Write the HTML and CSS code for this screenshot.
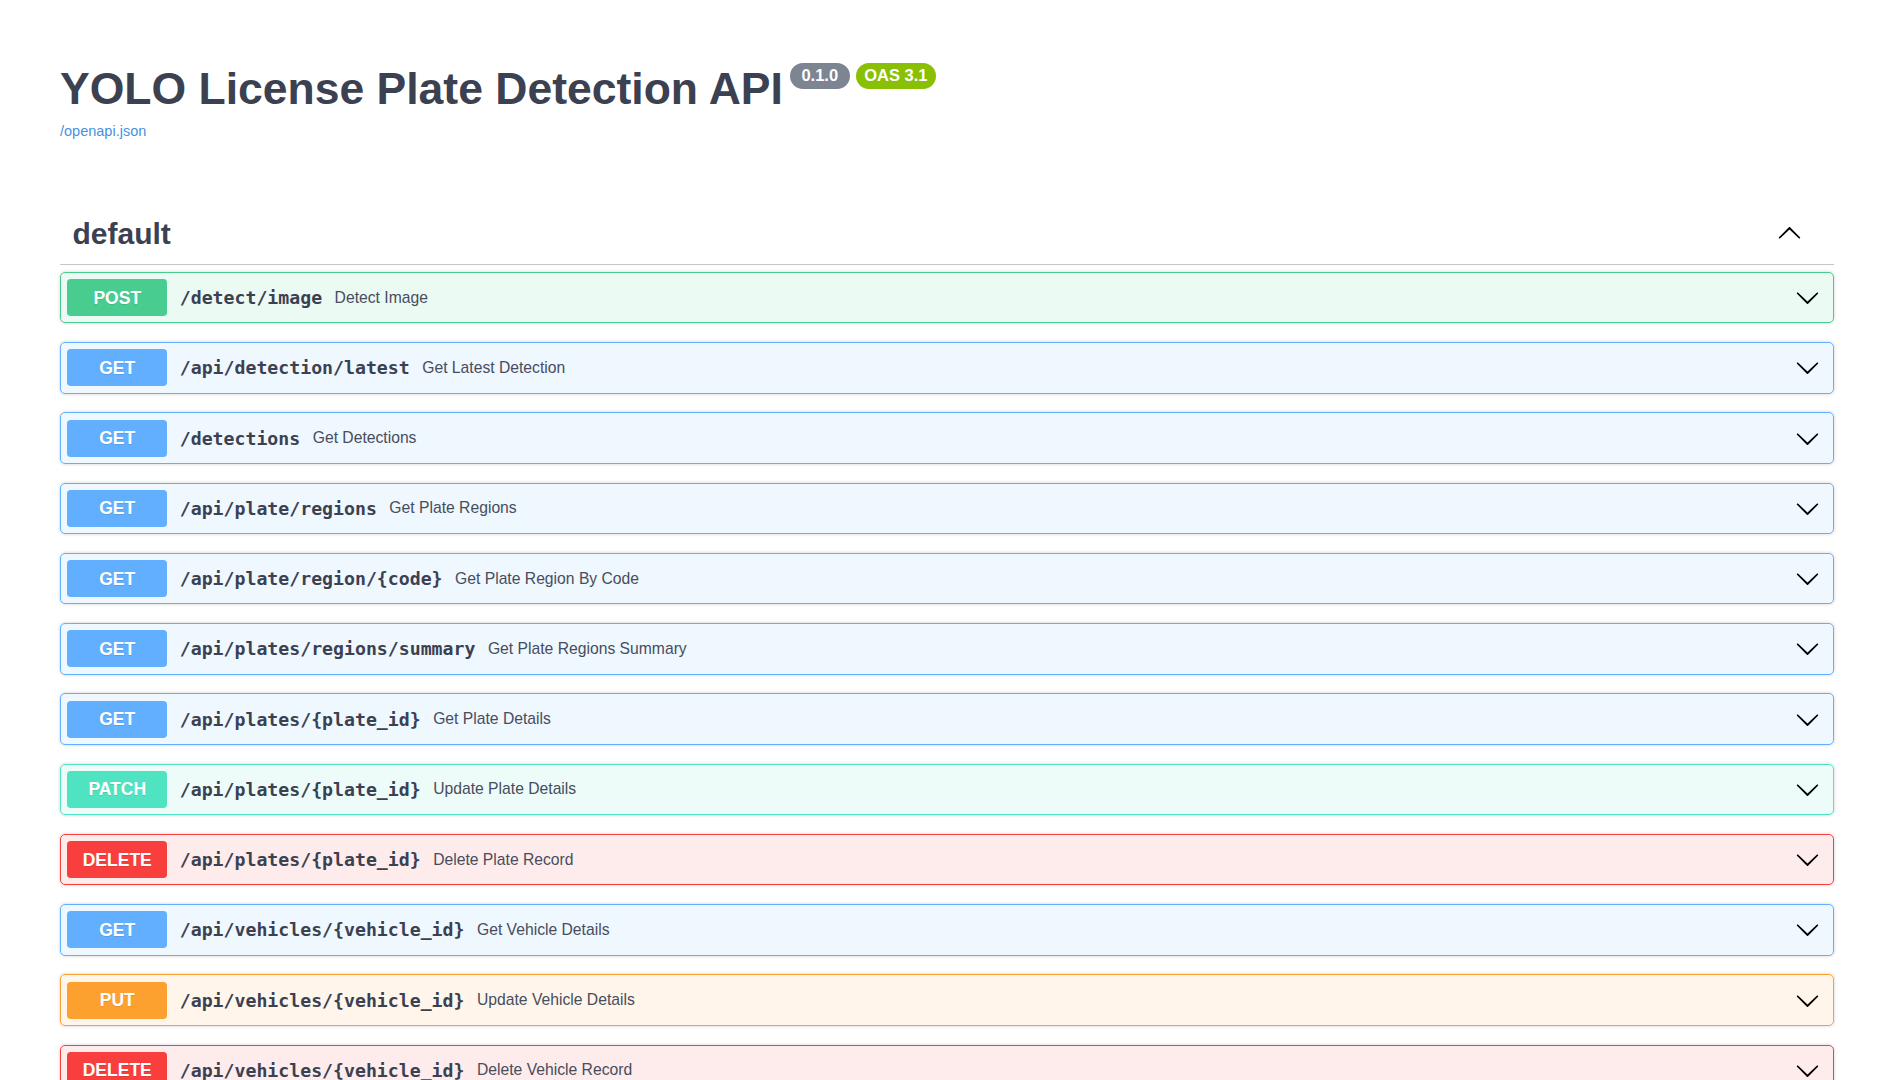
FILE: index.html
```html
<!DOCTYPE html>
<html lang="en">
<head>
<meta charset="utf-8">
<title>YOLO License Plate Detection API - Swagger UI</title>
<link rel="stylesheet" href="styles.css">
</head>
<body>
<div class="wrapper">
  <section class="info">
    <hgroup class="main">
      <h2 class="title">YOLO License Plate Detection API<span class="badge badge-version">0.1.0</span><span class="badge badge-oas">OAS 3.1</span></h2>
      <a class="link" href="#">/openapi.json</a>
    </hgroup>
  </section>

  <section class="tag-section">
    <h3 class="tag">
      <span class="tag-name">default</span>
      <span class="tag-control">
        <svg class="tag-arrow" viewBox="0 0 20 20" width="25" height="25"><path transform="rotate(180 10 10)" d="M17.418 6.109c.272-.268.709-.268.979 0s.271.701 0 .969l-7.908 7.83c-.27.268-.707.268-.979 0l-7.908-7.83c-.27-.268-.27-.701 0-.969.271-.268.709-.268.979 0L10 13.25l7.418-7.141z"/></svg>
      </span>
    </h3>

    <div class="operations">
      <div class="opblock post">
        <div class="summary"><span class="method">POST</span><span class="path">/detect/image</span><span class="desc">Detect Image</span><span class="control"><svg viewBox="0 0 20 20" width="25" height="25"><path d="M17.418 6.109c.272-.268.709-.268.979 0s.271.701 0 .969l-7.908 7.83c-.27.268-.707.268-.979 0l-7.908-7.83c-.27-.268-.27-.701 0-.969.271-.268.709-.268.979 0L10 13.25l7.418-7.141z"/></svg></span></div>
      </div>
      <div class="opblock get">
        <div class="summary"><span class="method">GET</span><span class="path">/api/detection/latest</span><span class="desc">Get Latest Detection</span><span class="control"><svg viewBox="0 0 20 20" width="25" height="25"><path d="M17.418 6.109c.272-.268.709-.268.979 0s.271.701 0 .969l-7.908 7.83c-.27.268-.707.268-.979 0l-7.908-7.83c-.27-.268-.27-.701 0-.969.271-.268.709-.268.979 0L10 13.25l7.418-7.141z"/></svg></span></div>
      </div>
      <div class="opblock get">
        <div class="summary"><span class="method">GET</span><span class="path">/detections</span><span class="desc">Get Detections</span><span class="control"><svg viewBox="0 0 20 20" width="25" height="25"><path d="M17.418 6.109c.272-.268.709-.268.979 0s.271.701 0 .969l-7.908 7.83c-.27.268-.707.268-.979 0l-7.908-7.83c-.27-.268-.27-.701 0-.969.271-.268.709-.268.979 0L10 13.25l7.418-7.141z"/></svg></span></div>
      </div>
      <div class="opblock get">
        <div class="summary"><span class="method">GET</span><span class="path">/api/plate/regions</span><span class="desc">Get Plate Regions</span><span class="control"><svg viewBox="0 0 20 20" width="25" height="25"><path d="M17.418 6.109c.272-.268.709-.268.979 0s.271.701 0 .969l-7.908 7.83c-.27.268-.707.268-.979 0l-7.908-7.83c-.27-.268-.27-.701 0-.969.271-.268.709-.268.979 0L10 13.25l7.418-7.141z"/></svg></span></div>
      </div>
      <div class="opblock get">
        <div class="summary"><span class="method">GET</span><span class="path">/api/plate/region/{code}</span><span class="desc">Get Plate Region By Code</span><span class="control"><svg viewBox="0 0 20 20" width="25" height="25"><path d="M17.418 6.109c.272-.268.709-.268.979 0s.271.701 0 .969l-7.908 7.83c-.27.268-.707.268-.979 0l-7.908-7.83c-.27-.268-.27-.701 0-.969.271-.268.709-.268.979 0L10 13.25l7.418-7.141z"/></svg></span></div>
      </div>
      <div class="opblock get">
        <div class="summary"><span class="method">GET</span><span class="path">/api/plates/regions/summary</span><span class="desc">Get Plate Regions Summary</span><span class="control"><svg viewBox="0 0 20 20" width="25" height="25"><path d="M17.418 6.109c.272-.268.709-.268.979 0s.271.701 0 .969l-7.908 7.83c-.27.268-.707.268-.979 0l-7.908-7.83c-.27-.268-.27-.701 0-.969.271-.268.709-.268.979 0L10 13.25l7.418-7.141z"/></svg></span></div>
      </div>
      <div class="opblock get">
        <div class="summary"><span class="method">GET</span><span class="path">/api/plates/{plate_id}</span><span class="desc">Get Plate Details</span><span class="control"><svg viewBox="0 0 20 20" width="25" height="25"><path d="M17.418 6.109c.272-.268.709-.268.979 0s.271.701 0 .969l-7.908 7.83c-.27.268-.707.268-.979 0l-7.908-7.83c-.27-.268-.27-.701 0-.969.271-.268.709-.268.979 0L10 13.25l7.418-7.141z"/></svg></span></div>
      </div>
      <div class="opblock patch">
        <div class="summary"><span class="method">PATCH</span><span class="path">/api/plates/{plate_id}</span><span class="desc">Update Plate Details</span><span class="control"><svg viewBox="0 0 20 20" width="25" height="25"><path d="M17.418 6.109c.272-.268.709-.268.979 0s.271.701 0 .969l-7.908 7.83c-.27.268-.707.268-.979 0l-7.908-7.83c-.27-.268-.27-.701 0-.969.271-.268.709-.268.979 0L10 13.25l7.418-7.141z"/></svg></span></div>
      </div>
      <div class="opblock delete">
        <div class="summary"><span class="method">DELETE</span><span class="path">/api/plates/{plate_id}</span><span class="desc">Delete Plate Record</span><span class="control"><svg viewBox="0 0 20 20" width="25" height="25"><path d="M17.418 6.109c.272-.268.709-.268.979 0s.271.701 0 .969l-7.908 7.83c-.27.268-.707.268-.979 0l-7.908-7.83c-.27-.268-.27-.701 0-.969.271-.268.709-.268.979 0L10 13.25l7.418-7.141z"/></svg></span></div>
      </div>
      <div class="opblock get">
        <div class="summary"><span class="method">GET</span><span class="path">/api/vehicles/{vehicle_id}</span><span class="desc">Get Vehicle Details</span><span class="control"><svg viewBox="0 0 20 20" width="25" height="25"><path d="M17.418 6.109c.272-.268.709-.268.979 0s.271.701 0 .969l-7.908 7.83c-.27.268-.707.268-.979 0l-7.908-7.83c-.27-.268-.27-.701 0-.969.271-.268.709-.268.979 0L10 13.25l7.418-7.141z"/></svg></span></div>
      </div>
      <div class="opblock put">
        <div class="summary"><span class="method">PUT</span><span class="path">/api/vehicles/{vehicle_id}</span><span class="desc">Update Vehicle Details</span><span class="control"><svg viewBox="0 0 20 20" width="25" height="25"><path d="M17.418 6.109c.272-.268.709-.268.979 0s.271.701 0 .969l-7.908 7.83c-.27.268-.707.268-.979 0l-7.908-7.83c-.27-.268-.27-.701 0-.969.271-.268.709-.268.979 0L10 13.25l7.418-7.141z"/></svg></span></div>
      </div>
      <div class="opblock delete">
        <div class="summary"><span class="method">DELETE</span><span class="path">/api/vehicles/{vehicle_id}</span><span class="desc">Delete Vehicle Record</span><span class="control"><svg viewBox="0 0 20 20" width="25" height="25"><path d="M17.418 6.109c.272-.268.709-.268.979 0s.271.701 0 .969l-7.908 7.83c-.27.268-.707.268-.979 0l-7.908-7.83c-.27-.268-.27-.701 0-.969.271-.268.709-.268.979 0L10 13.25l7.418-7.141z"/></svg></span></div>
      </div>
    </div>
  </section>
</div>
</body>
</html>
```

FILE: styles.css
```css
html {
  overflow: hidden;
}

body {
  margin: 0;
  background: #fff;
  color: #3b4151;
  font-family: "Liberation Sans", Arial, sans-serif;
}

.wrapper {
  padding: 62.5px 51px 0 60px;
}

.info {
  margin-bottom: 64.5px;
}

.main {
  margin: 0;
}

.title {
  margin: 0;
  font-size: 44.5px;
  line-height: 51.75px;
  font-weight: 700;
  color: #3b4151;
}

.badge {
  display: inline-block;
  vertical-align: top;
  margin-left: 7px;
  padding: 2.5px 9px;
  border-radius: 71px;
  background: #7d8492;
  color: #fff;
  font-size: 16.5px;
  line-height: 21px;
  font-weight: 700;
}

.badge-version {
  padding: 2.5px 11.5px;
}

.badge-oas {
  margin-left: 6px;
  padding: 2.5px 8.5px;
  background: #89bf04;
}

.link {
  display: block;
  margin-top: 9px;
  font-size: 14.5px;
  line-height: 16.7px;
  color: #4990e2;
  text-decoration: none;
}

.tag {
  display: flex;
  align-items: center;
  margin: 0 0 7px;
  padding: 12.5px 32px 12.5px 12.5px;
  border-bottom: 1px solid rgba(59, 65, 81, 0.3);
  font-size: 30px;
  line-height: 34.5px;
  font-weight: 700;
  color: #3b4151;
}

.tag-name {
  flex: 1;
}

.tag-control {
  display: flex;
  margin-bottom: 2px;
}

.tag-arrow {
  display: block;
  fill: #000;
}

.opblock {
  margin-bottom: 18.75px;
  border: 1px solid #000;
  border-radius: 5px;
  box-shadow: 0 0 3.75px rgba(0, 0, 0, 0.19);
}

.summary {
  display: flex;
  align-items: center;
  padding: 6.25px;
}

.method {
  flex: none;
  width: 100px;
  padding: 7.5px 0;
  line-height: 22px;
  border-radius: 3.75px;
  text-align: center;
  color: #fff;
  font-size: 17.5px;
  font-weight: 700;
  text-shadow: 0 1.25px 0 rgba(0, 0, 0, 0.1);
}

.path {
  flex: none;
  padding: 0 12.5px;
  font-family: "DejaVu Sans Mono", "Liberation Mono", monospace;
  font-weight: 700;
  font-size: 18.2px;
  color: #3b4151;
}

.desc {
  flex: 1;
  font-size: 15.7px;
  color: #474d5d;
}

.control {
  display: flex;
  padding: 0 6.75px 0 12.5px;
}

.control svg {
  display: block;
  fill: #000;
}

.post { border-color: #49cc90; background: rgba(73, 204, 144, 0.1); }
.post .method { background: #49cc90; }

.get { border-color: #61affe; background: rgba(97, 175, 254, 0.1); }
.get .method { background: #61affe; }

.patch { border-color: #50e3c2; background: rgba(80, 227, 194, 0.1); }
.patch .method { background: #50e3c2; }

.delete { border-color: #f93e3e; background: rgba(249, 62, 62, 0.1); }
.delete .method { background: #f93e3e; }

.put { border-color: #fca130; background: rgba(252, 161, 48, 0.1); }
.put .method { background: #fca130; }
```
